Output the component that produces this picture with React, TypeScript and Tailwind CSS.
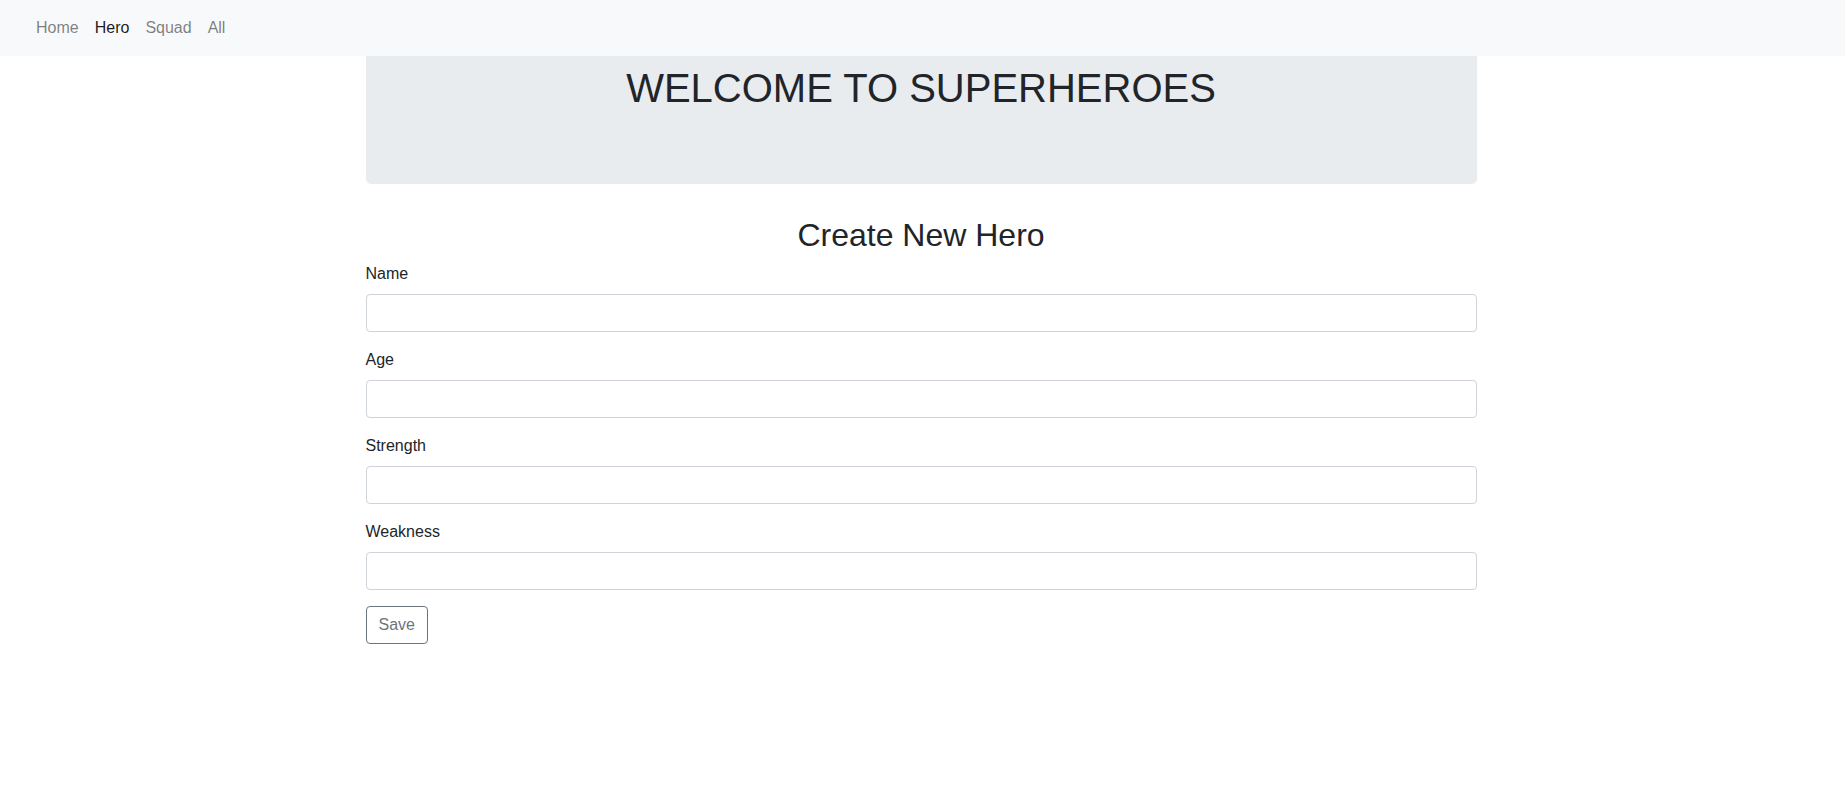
export default function App() {
  const fields = ["Name", "Age", "Strength", "Weakness"]

  return (
    <div className="min-h-screen bg-white text-[#212529] font-['Liberation_Sans',Arial,sans-serif]">
      <nav className="h-14 bg-[#f8f9fa] flex items-center px-[36px] text-base leading-6">
        <div className="flex gap-4">
          <a href="#" className="text-black/50">Home</a>
          <a href="#" className="text-black/90">Hero</a>
          <a href="#" className="text-black/50">Squad</a>
          <a href="#" className="text-black/50">All</a>
        </div>
      </nav>

      <div className="w-[1111px] ml-[calc(50%-557px)]">
        <div className="h-32 bg-[#e9ecef] rounded-b-[5px] pt-2 mb-8">
          <h1 className="text-[40px] leading-[48px] text-center">WELCOME TO SUPERHEROES</h1>
        </div>

        <h2 className="text-[32px] leading-[38px] text-center mb-2">Create New Hero</h2>

        <form>
          {fields.map((f) => (
            <div key={f} className="mb-4">
              <label className="block text-base leading-6 mb-2">{f}</label>
              <input
                type="text"
                className="block w-full h-[38px] border border-[#ced4da] rounded-[4px] px-3 bg-white"
              />
            </div>
          ))}
          <button
            type="button"
            className="h-[38px] px-3 border border-[#6c757d] rounded-[4px] text-[#6c757d] text-base leading-6"
          >
            Save
          </button>
        </form>
      </div>
    </div>
  )
}
